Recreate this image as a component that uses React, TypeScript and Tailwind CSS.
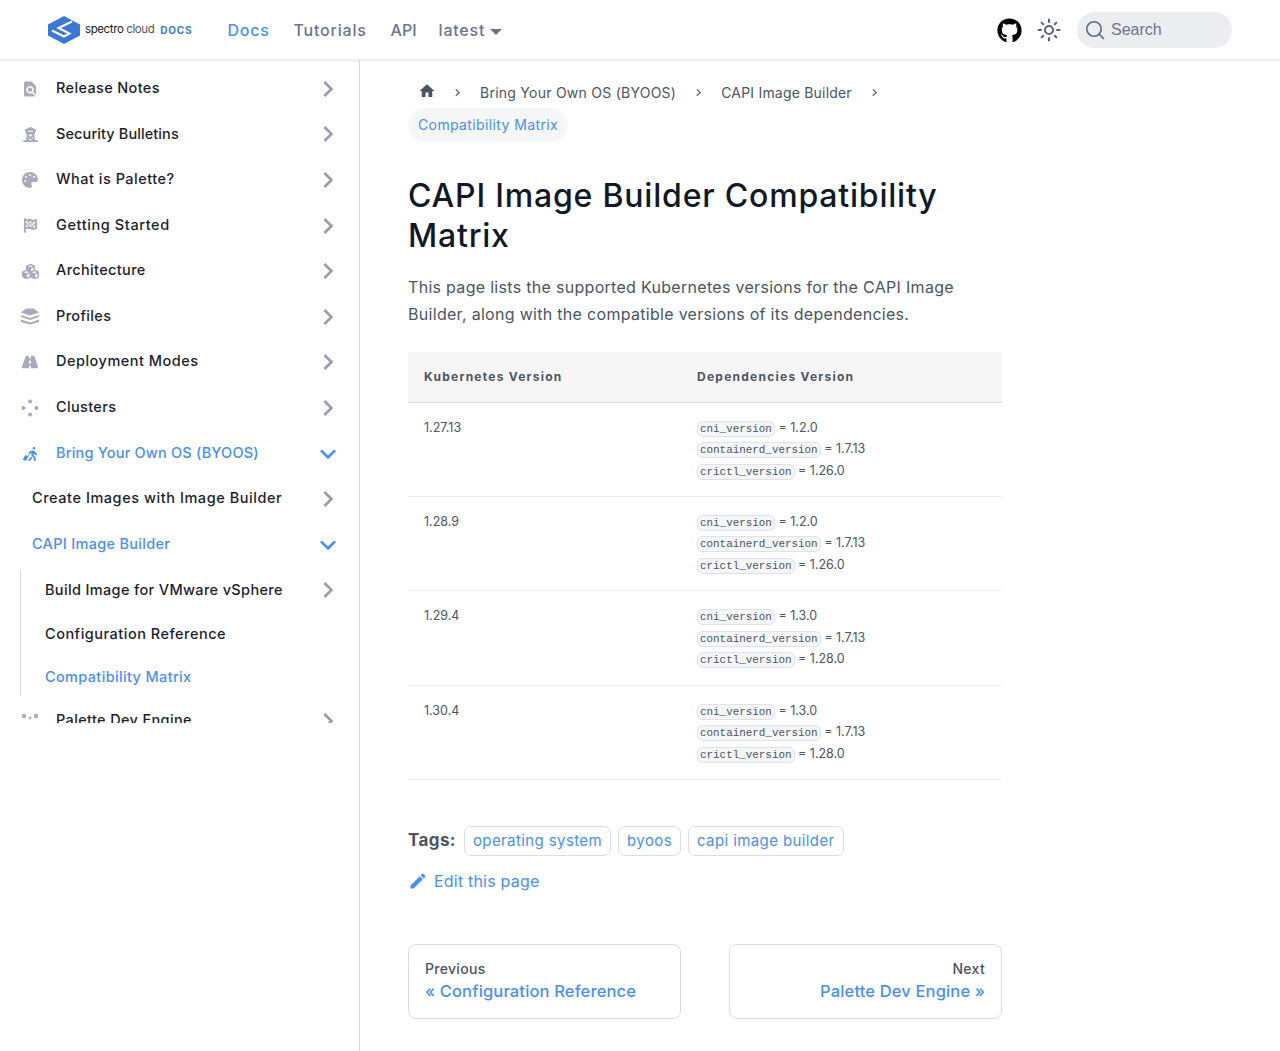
import {
  MdFindInPage,
  MdKeyboardArrowDown,
  MdKeyboardArrowRight,
  MdEdit,
  MdHome,
} from "react-icons/md";
import {
  FaPalette,
  FaFlagCheckered,
  FaCubes,
  FaRoad,
  FaGithub,
  FaTowerObservation,
  FaPersonWalkingLuggage,
} from "react-icons/fa6";
import type { ReactNode } from "react";

const font = "font-['Inter','Noto_Sans',sans-serif]";
const label = "text-[14.5px] font-medium";

function ClusterDots() {
  return (
    <svg viewBox="0 0 18 18" className="h-[18px] w-[18px]" fill="currentColor">
      <circle cx="9" cy="2.5" r="2" />
      <circle cx="2.5" cy="9" r="2" />
      <circle cx="15.5" cy="9" r="2" />
      <circle cx="9" cy="15.5" r="2" />
    </svg>
  );
}

function EngineDots() {
  return (
    <svg viewBox="0 0 18 18" className="h-[18px] w-[18px]" fill="currentColor">
      <circle cx="3" cy="4" r="2.2" />
      <circle cx="15" cy="4" r="2.2" />
      <circle cx="9" cy="6" r="1.4" />
      <circle cx="3" cy="14" r="2.2" />
      <circle cx="15" cy="14" r="2.2" />
    </svg>
  );
}

function ProfilesIcon() {
  return (
    <svg viewBox="0 0 18 17" className="h-[17px] w-[18px]" fill="currentColor">
      <path d="M5 0.5h8l5 4-9 3-9-3z" />
      <path d="M0 7l9 3 9-3v2l-9 3-9-3z" />
      <path d="M0 11.5l9 3 9-3v2.5l-9 2.5-9-2.5z" />
    </svg>
  );
}

function Logo() {
  return (
    <svg viewBox="0 0 32 28" className="h-[28px] w-[32px]">
      <polygon points="16,0 32,8.5 32,19.5 16,28 0,19.5 0,8.5" fill="#3a78d4" />
      <polyline points="24,5.5 10.5,12 21.5,17.5 16,20.5 4,14.5" fill="none" stroke="#fff" strokeWidth="2" />
    </svg>
  );
}

type Item = { icon: ReactNode; label: string; track?: string };

const topItems: Item[] = [
  { icon: <MdFindInPage size={22} />, label: "Release Notes" },
  { icon: <FaTowerObservation size={15} />, label: "Security Bulletins", track: "tracking-[0.1px]" },
  { icon: <FaPalette size={16} />, label: "What is Palette?", track: "tracking-[0.5px]" },
  { icon: <FaFlagCheckered size={15} />, label: "Getting Started", track: "tracking-[0.6px]" },
  { icon: <FaCubes size={17} />, label: "Architecture" },
  { icon: <ProfilesIcon />, label: "Profiles" },
  { icon: <FaRoad size={16} />, label: "Deployment Modes", track: "tracking-[0.5px]" },
  { icon: <ClusterDots />, label: "Clusters" },
];

function Arrow({ open }: { open?: boolean }) {
  return open ? (
    <MdKeyboardArrowDown size={32} className="text-[#4a8ff5]" />
  ) : (
    <MdKeyboardArrowRight size={32} className="text-[#9a9cb0]" />
  );
}

function TopRow({ item, active }: { item: Item; active?: boolean }) {
  return (
    <div className="flex h-[45.6px] shrink-0 items-center justify-between pl-[21px] pr-[15px]">
      <div className="flex items-center">
        <span className={`flex w-[18px] justify-center ${active ? "text-[#4a8ff5]" : "text-[#a9abbd]"}`}>
          {item.icon}
        </span>
        <span className={`-mt-[2px] ml-[17px] ${label} ${item.track ?? "tracking-[0.35px]"} ${active ? "text-[#4a8ff5]" : "text-[#1c1e2e]"}`}>
          {item.label}
        </span>
      </div>
      <Arrow open={active} />
    </div>
  );
}

function Sidebar() {
  return (
    <aside className="h-[991px] w-[360px] shrink-0 border-r border-[#dadde1]">
      <div className="h-[663px] overflow-hidden pt-[6px]">
        {topItems.map((item) => (
          <TopRow key={item.label} item={item} />
        ))}
        <TopRow active item={{ icon: <FaPersonWalkingLuggage size={16} />, label: "Bring Your Own OS (BYOOS)", track: "tracking-[0.2px]" }} />
        <div className="flex h-[45.6px] items-center justify-between pl-[32px] pr-[15px]">
          <span className={`-mt-[2px] ${label} tracking-[0.55px] text-[#1c1e2e]`}>Create Images with Image Builder</span>
          <Arrow />
        </div>
        <div className="flex h-[45.6px] items-center justify-between pl-[32px] pr-[15px]">
          <span className={`-mt-[2px] ${label} tracking-[0.3px] text-[#4a8ff5]`}>CAPI Image Builder</span>
          <Arrow open />
        </div>
        <div className="mb-[3px] ml-[20px] mt-[2px] h-[126px] border-l border-[#dadde1]">
          <div className="flex h-[43px] items-center justify-between pb-[2px] pl-[24px] pr-[15px]">
            <span className={`${label} tracking-[0.35px] text-[#1c1e2e]`}>Build Image for VMware vSphere</span>
            <Arrow />
          </div>
          <div className="flex h-[43px] items-center pl-[24px]">
            <span className={`${label} tracking-[0.5px] text-[#1c1e2e]`}>Configuration Reference</span>
          </div>
          <div className="flex h-[40px] items-center pl-[24px] pt-[3px]">
            <span className={`${label} tracking-[0.35px] text-[#4a8ff5]`}>Compatibility Matrix</span>
          </div>
        </div>
        <TopRow item={{ icon: <EngineDots />, label: "Palette Dev Engine" }} />
      </div>
    </aside>
  );
}

function Navbar() {
  return (
    <header className="relative z-10 flex h-[60px] items-center justify-between bg-white pl-[48px] pr-[48px] shadow-[inset_0_-1px_0_#eeeeee,0_1px_2px_rgba(0,0,0,0.08)]">
      <div className="flex items-center">
        <Logo />
        <span className="ml-[5px] text-[11.5px] tracking-[-0.4px] text-[#222]">
          spectro <span className="text-[#555]">cloud</span>
        </span>
        <span className="ml-[6px] text-[10px] font-bold tracking-[0.8px] text-[#3a78d4]">DOCS</span>
        <nav className="ml-[35px] flex items-center gap-[24px] text-[16px] font-medium tracking-[0.78px] text-[#6b7593]">
          <span className="text-[#4a8ff5]">Docs</span>
          <span>Tutorials</span>
          <span className="-mr-[2px] tracking-normal">API</span>
          <span className="flex items-center">
            latest
            <span className="ml-[5px] mt-[3px] h-0 w-0 border-x-[6px] border-t-[6px] border-x-transparent border-t-[#6b7593]" />
          </span>
        </nav>
      </div>
      <div className="flex items-center">
        <FaGithub size={25} className="text-black" />
        <svg viewBox="0 0 24 24" className="ml-[15px] h-[24px] w-[24px]" fill="none" stroke="#5a6478" strokeWidth="2" strokeLinecap="round">
          <circle cx="12" cy="12" r="4" />
          <path d="M12 1.5v2.5M12 20v2.5M1.5 12H4M20 12h2.5M4.6 4.6l1.7 1.7M17.7 17.7l1.7 1.7M4.6 19.4l1.7-1.7M17.7 6.3l1.7-1.7" />
        </svg>
        <div className="ml-[16px] flex h-[36px] w-[155px] items-center rounded-[18px] bg-[#ebedf0] pl-[8px]">
          <svg viewBox="0 0 20 20" className="h-[20px] w-[20px]" fill="none" stroke="#5f6b82" strokeWidth="1.6" strokeLinecap="round">
            <circle cx="9" cy="9" r="7.2" />
            <path d="M14.2 14.2L18.5 18.5" />
          </svg>
          <span className="ml-[6px] font-['Liberation_Sans',sans-serif] text-[16px] text-[#6b7593]">Search</span>
        </div>
      </div>
    </header>
  );
}

function Sep() {
  return <MdKeyboardArrowRight size={15} className="mx-[15px] text-[#606770]" />;
}

function Breadcrumbs() {
  return (
    <div className="text-[14px] tracking-[0.25px] text-[#4b5563]">
      <div className="flex h-[32px] items-center">
        <span className="-mr-[1px] -mt-[3px] ml-[10px]"><MdHome size={18} /></span>
        <Sep />
        <span>Bring Your Own OS (BYOOS)</span>
        <Sep />
        <span className="tracking-[0.2px]">CAPI Image Builder</span>
        <Sep />
      </div>
      <div className="inline-flex h-[34px] items-center rounded-[17px] bg-[#f5f6f7] px-[10px] pb-[2px] tracking-[0.38px] text-[#4a8ff5]">Compatibility Matrix</div>
    </div>
  );
}

function Code({ children }: { children: ReactNode }) {
  return (
    <code className="rounded-[6px] border border-[#e0e2e6] bg-[#f5f6f7] px-[2px] py-[1px] font-['Liberation_Mono',monospace] text-[10.9px] text-[#4b5563]">
      {children}
    </code>
  );
}

const rows = [
  ["1.27.13", "1.2.0", "1.7.13", "1.26.0"],
  ["1.28.9", "1.2.0", "1.7.13", "1.26.0"],
  ["1.29.4", "1.3.0", "1.7.13", "1.28.0"],
  ["1.30.4", "1.3.0", "1.7.13", "1.28.0"],
];

function VersionTable() {
  return (
    <table className="mt-[24px] w-full border-collapse text-left text-[12.5px] text-[#4b5563]">
      <thead>
        <tr className="h-[50px] border-b border-[#dadde1] bg-[#f6f6f7]">
          <th className="w-[273px] pl-[16px] text-[12px] font-bold tracking-[1.25px]">Kubernetes Version</th>
          <th className="pl-[16px] text-[12px] font-bold tracking-[1.25px]">Dependencies Version</th>
        </tr>
      </thead>
      <tbody>
        {rows.map((r) => (
          <tr key={r[0]} className="h-[94.4px] border-b border-[#eceef0] align-top">
            <td className="pl-[16px] pt-[15px] leading-[20.6px]">{r[0]}</td>
            <td className="pl-[16px] pt-[15px] leading-[20.6px]">
              <div><Code>cni_version</Code> = {r[1]}</div>
              <div><Code>containerd_version</Code> = {r[2]}</div>
              <div><Code>crictl_version</Code> = {r[3]}</div>
            </td>
          </tr>
        ))}
      </tbody>
    </table>
  );
}

function Tag({ children }: { children: ReactNode }) {
  return (
    <span className="flex h-[30px] items-center rounded-[7px] border border-[#dadde1] px-[8px] text-[15px] tracking-[0.4px] text-[#4a8ff5]">
      {children}
    </span>
  );
}

function PagerCard({ small, title, right }: { small: string; title: string; right?: boolean }) {
  return (
    <div className={`h-[75px] w-[273px] rounded-[8px] border border-[#dadde1] px-[16px] pt-[14px] ${right ? "text-right" : ""}`}>
      <div className="text-[14px] font-medium leading-[20px] tracking-[0.3px] text-[#4b5563]">{small}</div>
      <div className="text-[16.5px] font-medium leading-[24px] tracking-[0.15px] text-[#4a8ff5]">{title}</div>
    </div>
  );
}

export default function App() {
  return (
    <div className={`${font} h-[1051px] overflow-hidden bg-white`}>
      <Navbar />
      <div className="flex">
        <Sidebar />
        <main className="w-[642px] pl-[48px] pt-[16px]">
          <Breadcrumbs />
          <h1 className="mt-[34px] text-[32px] font-medium leading-[40px] tracking-[0.8px] text-[#111827]">
            CAPI Image Builder Compatibility Matrix
          </h1>
          <p className="mt-[18px] text-[16px] leading-[27px] tracking-[0.3px] text-[#4b5563]">
            This page lists the supported Kubernetes versions for the CAPI Image Builder, along with the compatible versions of its dependencies.
          </p>
          <VersionTable />
          <div className="mt-[46px] flex items-center gap-[7px]">
            <span className="mr-[1px] text-[17px] font-bold tracking-[0.4px] text-[#4b5563]">Tags:</span>
            <Tag>operating system</Tag>
            <Tag>byoos</Tag>
            <Tag>capi image builder</Tag>
          </div>
          <div className="mt-[13px] flex items-center text-[16px] tracking-[0.2px] text-[#4a8ff5]">
            <MdEdit size={20} />
            <span className="ml-[6px]">Edit this page</span>
          </div>
          <div className="mt-[51px] flex justify-between">
            <PagerCard small="Previous" title="« Configuration Reference" />
            <PagerCard small="Next" title="Palette Dev Engine »" right />
          </div>
        </main>
      </div>
    </div>
  );
}
